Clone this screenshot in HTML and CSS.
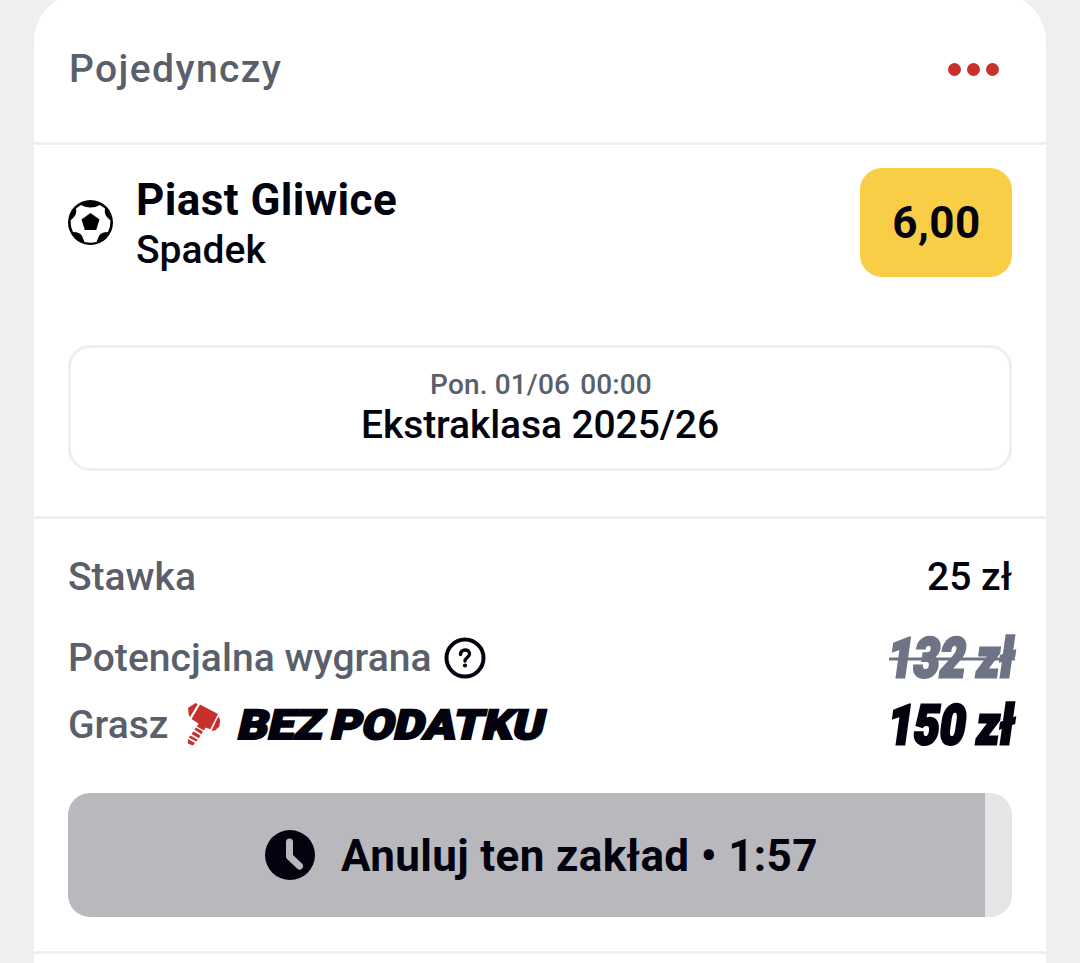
FILE: index.html
```html
<!DOCTYPE html>
<html lang="pl">

<head>
    <meta charset="UTF-8">
    <title>Kupon</title>
    <link rel="stylesheet" href="styles.css">
</head>

<body>
    <div class="coupon">
        <div class="coupon-header">
            <span class="type">Pojedynczy</span>
            <div class="dots"><i></i><i></i><i></i></div>
        </div>

        <div class="event">
            <div class="pick">
                <svg class="ball" viewBox="0 0 46 46">
                    <circle cx="22.500" cy="22.500" r="22.5" fill="#000" />
                    <path fill="#fff" d="M13 5 Q18 7.500 22.500 7.500 Q27 7.500 32 5 L37 8.500 Q36 14 39 17 L42.500 20.500 Q42.500 27 40 32 Q33 32 31 36 L28.500 42 Q22.500 43.500 16.500 42 L14 36 Q12 32 5 32 Q2.500 27 2.500 20.500 L6 17 Q9 14 8 8.500Z" />
                    <path d="M22.500 13 31.500 19.500 28.200 30H16.800L13.500 19.500Z" />
                </svg>
                <div class="pick-text">
                    <div class="team">Piast Gliwice</div>
                    <div class="market">Spadek</div>
                </div>
                <div class="odds">6,00</div>
            </div>
            <div class="match">
                <div class="date">Pon. 01/06 <span>00:00</span></div>
                <div class="league">Ekstraklasa 2025/26</div>
            </div>
        </div>

        <div class="summary">
            <div class="row stake">
                <span class="label">Stawka</span>
                <span class="value">25 zł</span>
            </div>
            <div class="row win">
                <span class="label win-label">Potencjalna wygrana</span>
                <svg class="help" viewBox="0 0 42 42">
                    <circle cx="21" cy="21" r="18.500" fill="none" stroke="#03030f" stroke-width="4" />
                    <path d="M16.500 17.500C16.500 11.500 25.500 11.500 25.500 17C25.500 20.500 21 20.500 21 24" fill="none" stroke="#03030f" stroke-width="3.400" stroke-linecap="round" />
                    <circle cx="21" cy="28.500" r="2.100" fill="#03030f" />
                </svg>
                <svg class="amount old" viewBox="0 0 152 80">
                    <text transform="translate(6 59) skewX(-8)" textLength="126" lengthAdjust="spacingAndGlyphs">132 zł</text>
                    <path d="M9 41H135" />
                </svg>
            </div>
            <div class="row tax">
                <span class="label tax-label">Grasz</span>
                <svg class="hammer" viewBox="0 0 36 44">
                    <g fill="#c8302b">
                        <path d="M10.500 0 12.700 1.200 5 14 3.800 12 3 5Z" />
                        <path d="M15 1.500 33 11 25.300 26.300 20.500 24.500 19 27.500 12 23.500 13.500 20.500 6.500 16Z" />
                        <path d="M33.300 13.500 35.200 17 34.300 23.500 30 27.500 26.500 27.700Z" />
                        <path d="M11 24.500 18 28.500 16.500 31.200 9.500 26.700Z" />
                        <path d="M8.500 28.300 15.500 32.700 13.800 35.300 6.500 31Z" />
                        <path d="M5.500 32.500 12.800 36.800 11.300 38.500 3.700 34.500Z" />
                        <path d="M2.800 36 10 40 8 42.500 2.800 40.500Z" />
                    </g>
                </svg>
                <svg class="tax-free" viewBox="0 0 324 60">
                    <text transform="translate(0 44) skewX(-13)" textLength="306" lengthAdjust="spacingAndGlyphs">BEZ PODATKU</text>
                </svg>
                <svg class="amount" viewBox="0 0 152 80">
                    <text transform="translate(6 59) skewX(-8)" textLength="126" lengthAdjust="spacingAndGlyphs">150 zł</text>
                </svg>
            </div>
            <div class="cancel">
                <div class="cancel-content">
                    <svg class="clock" viewBox="0 0 50 50">
                        <circle cx="25" cy="25" r="25" fill="#03030f" />
                        <path d="M24.500 12V26.500L34.500 36" fill="none" stroke="#b9b8bc" stroke-width="7" stroke-linecap="round" stroke-linejoin="round" />
                    </svg>
                    <span class="cancel-text">Anuluj ten zakład • 1:57</span>
                </div>
            </div>
        </div>
    </div>
</body>

</html>
```
FILE: styles.css
```css
* {
    box-sizing: border-box;
}

body {
    margin: 0;
    height: 963px;
    overflow: hidden;
    background-color: #eeeff1;
    font-family: Roboto, sans-serif;
    font-weight: 500;
    color: #03030f;
    white-space: nowrap;
}

.coupon {
    width: 1012px;
    height: 975px;
    margin: -8px auto 0 34px;
    background-color: #fff;
    border-radius: 50px 50px 0 0;
    overflow: hidden;
}

.coupon-header {
    display: flex;
    justify-content: space-between;
    align-items: center;
    height: 153px;
    padding: 4px 47px 0 35px;
    border-bottom: 3px solid #eeeff1;
}

.type {
    font-size: 39px;
    letter-spacing: 1.4px;
    color: #5a606b;
}

.dots {
    display: flex;
    gap: 6px;
}

.dots i {
    width: 13px;
    height: 13px;
    border-radius: 50%;
    background-color: #c8302b;
}

.event {
    height: 374px;
    padding: 23px 34px 0;
    border-bottom: 3px solid #eeeff1;
}

.pick {
    display: flex;
    align-items: center;
    height: 109px;
}

.ball {
    width: 46px;
    height: 46px;
}

.pick-text {
    flex: 1;
    padding: 2px 0 0 22px;
}

.team {
    font-size: 44px;
    line-height: 52px;
    font-weight: 700;
    letter-spacing: 0.4px;
}

.market {
    font-size: 39px;
    line-height: 48px;
}

.odds {
    width: 152px;
    height: 109px;
    border-radius: 22px;
    background-color: #f8ce46;
    font-size: 44px;
    line-height: 111px;
    font-weight: 700;
    letter-spacing: 0.5px;
    text-indent: 1px;
    text-align: center;
}

.match {
    height: 126px;
    margin-top: 68px;
    padding-top: 20px;
    border: 3px solid #eeeff1;
    border-radius: 22px;
    text-align: center;
}

.date {
    font-size: 28px;
    line-height: 34px;
    letter-spacing: 0.15px;
    text-indent: 2px;
    color: #5a606b;
}

.date span {
    margin-left: 3px;
}

.league {
    font-size: 39px;
    line-height: 46px;
    letter-spacing: -0.1px;
}

.summary {
    height: 435px;
    padding: 29px 34px 0;
    border-bottom: 3px solid #eeeff1;
}

.row {
    display: flex;
    align-items: center;
    height: 58px;
}

.label,
.value {
    font-size: 39px;
    line-height: 46px;
}

.label {
    color: #5a606b;
}

.value {
    margin-left: auto;
}

.win {
    margin-top: 23px;
}

.win-label {
    letter-spacing: 0.05px;
}

.tax {
    margin-top: 9px;
}

.help {
    width: 42px;
    height: 42px;
    margin-left: 12px;
}

.hammer {
    width: 36px;
    height: 44px;
    margin-left: 17px;
}

.tax-free {
    width: 324px;
    height: 60px;
    margin-left: 15px;
    overflow: visible;
}

.tax-free text {
    font-size: 41px;
    font-weight: 900;
    word-spacing: -3px;
    fill: #03030f;
    stroke: #03030f;
    stroke-width: 2.2px;
}

.amount {
    width: 152px;
    height: 80px;
    margin: 0 -20px 0 auto;
    overflow: visible;
}

.amount text {
    font-size: 55px;
    font-weight: 900;
    fill: #03030f;
    stroke: #03030f;
    stroke-width: 3px;
}

.old text {
    fill: #6e7485;
    stroke: #6e7485;
}

.old path {
    stroke: #6e7485;
    stroke-width: 3px;
}

.cancel {
    width: 944px;
    height: 124px;
    margin-top: 39px;
    border-radius: 22px;
    background: linear-gradient(to right, #b9b8bc 917px, #e5e5e5 917px);
}

.cancel-content {
    display: flex;
    align-items: center;
    height: 100%;
    padding-left: 197px;
}

.clock {
    width: 50px;
    height: 50px;
}

.cancel-text {
    margin-left: 26px;
    padding-top: 2px;
    font-size: 44px;
    font-weight: 700;
    letter-spacing: 0.36px;
}
```
